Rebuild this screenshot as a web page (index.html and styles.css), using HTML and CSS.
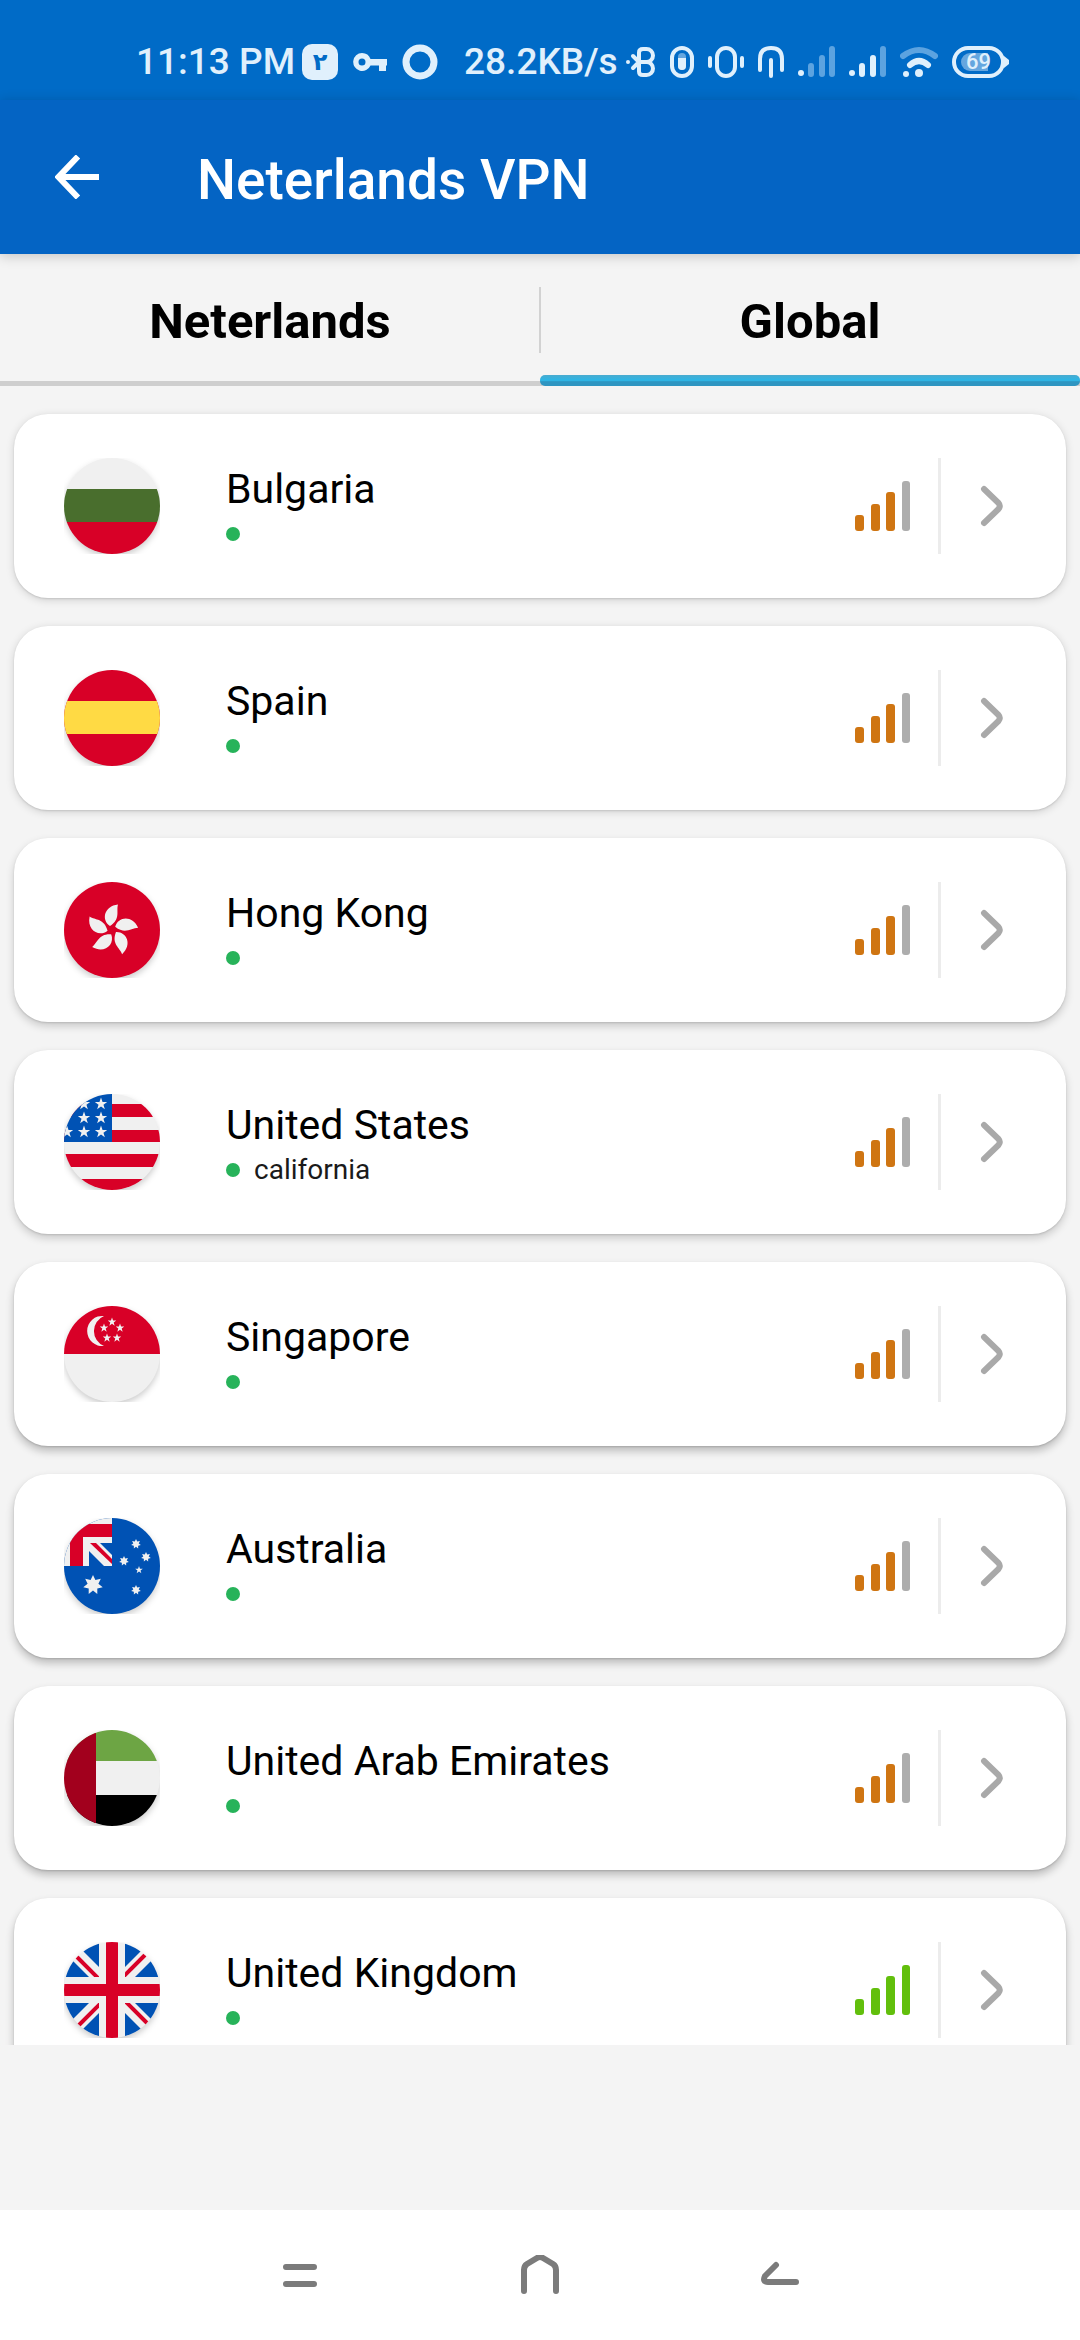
FILE: index.html
```html
<!DOCTYPE html>
<html lang="en">
<head>
<meta charset="utf-8">
<meta name="viewport" content="width=device-width, initial-scale=1">
<title>Neterlands VPN</title>
<link rel="stylesheet" href="styles.css">
</head>
<body>
<svg class="sprite" aria-hidden="true">
  <defs>
    <clipPath id="round"><circle cx="48" cy="48" r="48"/></clipPath>
    <clipPath id="quarter"><rect width="35" height="35"/></clipPath>
    <polygon id="star5" points="0,-10 2.4,-3.2 9.5,-3.1 3.8,1.2 5.9,8.1 0,4 -5.9,8.1 -3.8,1.2 -9.5,-3.1 -2.4,-3.2"/>
    <polygon id="star7" points="0,-10 2.4,-5 7.8,-6.2 5.4,-1.2 9.7,2.2 4.3,3.5 4.3,9 0,5.6 -4.3,9 -4.3,3.5 -9.7,2.2 -5.4,-1.2 -7.8,-6.2 -2.4,-5"/>
    <path id="petal" d="M46 44C37 38 40 24 54 22.500C52 29 57 37 46 44Z"/>
    <g id="union-a">
      <path fill="#0052b4" d="M10 0H35V25ZM0 10V35H25Z"/>
      <path stroke="#d80027" stroke-width="4" d="M8 10L36 38" clip-path="url(#quarter)"/>
    </g>
    <g id="union-b">
      <path fill="#0052b4" d="M10 0H35V25ZM0 10V35H25Z"/>
      <path stroke="#d80027" stroke-width="4" d="M10 8L38 36" clip-path="url(#quarter)"/>
    </g>
  </defs>
  <symbol id="signal" viewBox="0 0 56 50">
    <rect x="0" y="34" width="9" height="16" rx="3"/>
    <rect x="16" y="23" width="9" height="27" rx="3"/>
    <rect x="31" y="11" width="9" height="39" rx="3"/>
    <rect class="last-bar" x="47" y="0" width="8" height="50" rx="3"/>
  </symbol>
  <symbol id="chevron" viewBox="0 0 24 42">
    <path d="M4 4L18.500 18Q21 21 18.500 24L4 38" fill="none" stroke="#a9a9a9" stroke-width="6" stroke-linecap="round" stroke-linejoin="round"/>
  </symbol>
</svg>

<div class="status-bar">
  <span class="clock">11:13 PM</span>
  <span class="badge">۲</span>
  <svg class="key" width="34" height="20" viewBox="0 0 34 20"><path fill-rule="evenodd" d="M9 1a9 9 0 0 1 8.500 6H34v6.500h-1V19h-7v-5.500h-8.500A9 9 0 1 1 9 1zm0 5.500a3.500 3.500 0 1 0 0 7 3.500 3.500 0 0 0 0-7z"/></svg>
  <svg class="ring" width="36" height="36" viewBox="0 0 36 36"><circle cx="18" cy="18" r="14" fill="none" stroke="#e0f0fc" stroke-width="7"/></svg>
  <span class="speed">28.2KB/s</span>
  <div class="indicators">
    <svg width="30" height="32" viewBox="0 0 30 32"><g class="line"><path d="M13 16V6.500Q13 3 17 3h3.500a6 6 0 0 1 0 13H13v9.500Q13 29 17 29h3.500a6.500 6.500 0 0 0 0-13"/><path d="M7 10l6 6-6 6"/></g><circle cx="2" cy="16" r="2"/></svg>
    <svg width="24" height="32" viewBox="0 0 24 32"><rect class="line" x="2" y="2" width="20" height="28" rx="10"/><rect x="8" y="7" width="8" height="17" rx="4" opacity=".45"/><path d="M8 12h8v8a4 4 0 0 1-8 0z"/></svg>
    <svg width="36" height="32" viewBox="0 0 36 32"><rect class="line" x="9" y="2" width="18" height="28" rx="9"/><path class="line" d="M2 12v8M34 12v8"/></svg>
    <svg width="26" height="32" viewBox="0 0 26 32"><path class="line" d="M2 24V13Q2 2 13 2T24 13V24M13 14v16"/></svg>
    <svg width="37" height="32" viewBox="0 0 37 32"><circle cx="3" cy="27" r="3"/><path class="bar faint" d="M13 20v8M24 12v16M34 3v25"/></svg>
    <svg width="37" height="32" viewBox="0 0 37 32"><circle cx="3" cy="27" r="3"/><path class="bar" d="M13 20v8M24 12v16"/><path class="bar faint" d="M34 3v25"/></svg>
    <svg width="38" height="32" viewBox="0 0 38 32"><path class="bar faint" d="M3 10Q19-2 35 10"/><path class="bar" d="M10 19Q19 11 28 19"/><circle cx="19" cy="27" r="4"/><circle cx="6" cy="28" r="3"/></svg>
    <div class="battery">
      <svg width="57" height="32" viewBox="0 0 57 32"><rect class="line" x="2" y="2" width="49" height="28" rx="14"/><path d="M52 10l5 4v4l-5 4z"/><path d="M18 7h18v18H18a9 9 0 0 1 0-18z" opacity=".45"/></svg>
      <span class="battery-level">69</span>
    </div>
  </div>
</div>

<header class="app-bar">
  <button class="back" type="button" aria-label="Back"><svg width="44" height="44" viewBox="0 0 44 44"><path d="M23 1.500L3.500 22 23 42.500M4 22H44" fill="none" stroke="#fff" stroke-width="6"/></svg></button>
  <h1>Neterlands VPN</h1>
</header>

<div class="tabs" role="tablist">
  <button class="tab" type="button" role="tab" aria-selected="false">Neterlands</button>
  <button class="tab" type="button" role="tab" aria-selected="true">Global</button>
</div>

<main class="content">
  <ul class="servers">
    <li><button class="server" type="button">
      <svg class="flag" viewBox="0 0 96 96"><g><g clip-path="url(#round)"><path fill="#f0f0f0" d="M0 0H96V32H0z"/><path fill="#496e2d" d="M0 31H96V65H0z"/><path fill="#d80027" d="M0 64H96V96H0z"/></g></g></svg>
      <span class="info"><span class="name">Bulgaria</span><span class="place"><i class="dot"></i></span></span>
      <svg class="signal fair"><use href="#signal"/></svg><span class="rule"></span><svg class="chevron"><use href="#chevron"/></svg>
    </button></li>
    <li><button class="server" type="button">
      <svg class="flag" viewBox="0 0 96 96"><g><g clip-path="url(#round)"><path fill="#d80027" d="M0 0H96V96H0z"/><path fill="#ffda44" d="M0 31H96V64H0z"/></g></g></svg>
      <span class="info"><span class="name">Spain</span><span class="place"><i class="dot"></i></span></span>
      <svg class="signal fair"><use href="#signal"/></svg><span class="rule"></span><svg class="chevron"><use href="#chevron"/></svg>
    </button></li>
    <li><button class="server" type="button">
      <svg class="flag" viewBox="0 0 96 96"><g><g clip-path="url(#round)"><path fill="#d80027" d="M0 0H96V96H0z"/><g fill="#f0f0f0"><use href="#petal"/><use href="#petal" transform="rotate(72 48 48)"/><use href="#petal" transform="rotate(144 48 48)"/><use href="#petal" transform="rotate(216 48 48)"/><use href="#petal" transform="rotate(288 48 48)"/></g></g></g></svg>
      <span class="info"><span class="name">Hong Kong</span><span class="place"><i class="dot"></i></span></span>
      <svg class="signal fair"><use href="#signal"/></svg><span class="rule"></span><svg class="chevron"><use href="#chevron"/></svg>
    </button></li>
    <li><button class="server" type="button">
      <svg class="flag" viewBox="0 0 96 96"><g><g clip-path="url(#round)"><path fill="#f0f0f0" d="M0 0H96V96H0z"/><path fill="#d80027" d="M0 10H96V23H0zM0 36H96V48H0zM0 60H96V73H0zM0 85H96V96H0z"/><path fill="#0052b4" d="M0 0H48V48H0z"/><g fill="#f0f0f0"><use href="#star5" transform="translate(20 10) scale(.65)"/><use href="#star5" transform="translate(37 10) scale(.65)"/><use href="#star5" transform="translate(20 24) scale(.65)"/><use href="#star5" transform="translate(37 24) scale(.65)"/><use href="#star5" transform="translate(3 38) scale(.65)"/><use href="#star5" transform="translate(20 38) scale(.65)"/><use href="#star5" transform="translate(37 38) scale(.65)"/></g></g></g></svg>
      <span class="info"><span class="name">United States</span><span class="place"><i class="dot"></i>california</span></span>
      <svg class="signal fair"><use href="#signal"/></svg><span class="rule"></span><svg class="chevron"><use href="#chevron"/></svg>
    </button></li>
    <li><button class="server" type="button">
      <svg class="flag" viewBox="0 0 96 96"><g><g clip-path="url(#round)"><path fill="#f0f0f0" d="M0 0H96V96H0z"/><path fill="#d80027" d="M0 0H96V48H0z"/><g fill="#f0f0f0"><path d="M40 10A15.100 15.100 0 1 0 40 40A16.200 16.200 0 0 1 40 10Z"/><use href="#star5" transform="translate(48 16) scale(.45)"/><use href="#star5" transform="translate(40 22) scale(.45)"/><use href="#star5" transform="translate(56 22) scale(.45)"/><use href="#star5" transform="translate(43 32) scale(.45)"/><use href="#star5" transform="translate(53 32) scale(.45)"/></g></g></g></svg>
      <span class="info"><span class="name">Singapore</span><span class="place"><i class="dot"></i></span></span>
      <svg class="signal fair"><use href="#signal"/></svg><span class="rule"></span><svg class="chevron"><use href="#chevron"/></svg>
    </button></li>
    <li><button class="server" type="button">
      <svg class="flag" viewBox="0 0 96 96"><g><g clip-path="url(#round)"><path fill="#0052b4" d="M0 0H96V96H0z"/><path fill="#f0f0f0" d="M0 0H48V25H25V48H0z"/><path fill="#d80027" d="M6 6H48V19H19V48H6z"/><path fill="#f0f0f0" d="M25 25H36L48 37V48H40L25 33z"/><path fill="#d80027" d="M26 25H32L48 41V46z"/><g fill="#f0f0f0"><use href="#star7" transform="translate(29 67)"/><use href="#star7" transform="translate(72 26) scale(.5)"/><use href="#star7" transform="translate(82 39) scale(.5)"/><use href="#star7" transform="translate(60 43) scale(.5)"/><use href="#star5" transform="translate(75 52) scale(.4)"/><use href="#star7" transform="translate(72 72) scale(.5)"/></g></g></g></svg>
      <span class="info"><span class="name">Australia</span><span class="place"><i class="dot"></i></span></span>
      <svg class="signal fair"><use href="#signal"/></svg><span class="rule"></span><svg class="chevron"><use href="#chevron"/></svg>
    </button></li>
    <li><button class="server" type="button">
      <svg class="flag" viewBox="0 0 96 96"><g><g clip-path="url(#round)"><path fill="#f0f0f0" d="M0 0H96V96H0z"/><path fill="#6da544" d="M0 0H96V31H0z"/><path d="M0 65H96V96H0z"/><path fill="#a2001d" d="M0 0H32V96H0z"/></g></g></svg>
      <span class="info"><span class="name">United Arab Emirates</span><span class="place"><i class="dot"></i></span></span>
      <svg class="signal fair"><use href="#signal"/></svg><span class="rule"></span><svg class="chevron"><use href="#chevron"/></svg>
    </button></li>
    <li><button class="server" type="button">
      <svg class="flag" viewBox="0 0 96 96"><g><g clip-path="url(#round)"><path fill="#f0f0f0" d="M0 0H96V96H0z"/><use href="#union-a"/><use href="#union-a" transform="rotate(180 48 48)"/><use href="#union-b" transform="translate(96 0) scale(-1 1)"/><use href="#union-b" transform="translate(0 96) scale(1 -1)"/><path fill="#d80027" d="M42 0H54V42H96V54H54V96H42V54H0V42H42z"/></g></g></svg>
      <span class="info"><span class="name">United Kingdom</span><span class="place"><i class="dot"></i></span></span>
      <svg class="signal good"><use href="#signal"/></svg><span class="rule"></span><svg class="chevron"><use href="#chevron"/></svg>
    </button></li>
  </ul>
</main>

<nav class="system-nav">
  <button type="button" aria-label="Recent apps"><svg width="40" height="40" viewBox="0 0 40 40"><path d="M6 12H34M6 29H34"/></svg></button>
  <button type="button" aria-label="Home"><svg width="40" height="40" viewBox="0 0 40 40"><path d="M4 36V15Q4 11 7 9L17 3Q20 1 23 3L33 9Q36 11 36 15V36"/></svg></button>
  <button type="button" aria-label="Back"><svg width="40" height="40" viewBox="0 0 40 40"><path d="M16 10L5 21Q2 27 8 27H36"/></svg></button>
</nav>
</body>
</html>
```
FILE: styles.css
```css
* {
  box-sizing: border-box;
}

body {
  margin: 0;
  height: 100vh;
  display: flex;
  flex-direction: column;
  background: #f4f4f4;
  color: #000;
  font-family: Roboto, "Noto Sans", sans-serif;
}

button {
  margin: 0;
  padding: 0;
  border: 0;
  background: none;
  color: inherit;
  font: inherit;
}

svg {
  display: block;
  flex: none;
}

.sprite {
  position: absolute;
  width: 0;
  height: 0;
}

/* Status bar */

.status-bar {
  flex: none;
  display: flex;
  align-items: center;
  height: 100px;
  padding: 24px 71px 0 136px;
  background: #006bc7;
  color: #e0f0fc;
  fill: #e0f0fc;
  font-size: 37px;
  line-height: 44px;
  font-weight: 500;
  white-space: nowrap;
}

.badge {
  width: 36px;
  height: 36px;
  margin-left: 7px;
  border-radius: 10px;
  background: #e0f0fc;
  color: #006bc7;
  font-family: "DejaVu Sans", sans-serif;
  font-size: 24px;
  font-weight: 700;
  line-height: 36px;
  text-align: center;
}

.key {
  margin-left: 15px;
}

.ring {
  margin-left: 15px;
}

.speed {
  margin-left: 26px;
}

.indicators {
  display: flex;
  align-items: center;
  gap: 14px;
  margin-left: auto;
}

.line,
.bar {
  fill: none;
  stroke: #e0f0fc;
  stroke-width: 4;
  stroke-linecap: round;
  stroke-linejoin: round;
}

.bar {
  stroke-width: 6;
}

.faint {
  stroke: #5ca3e0;
}

.battery {
  display: grid;
}

.battery > * {
  grid-area: 1 / 1;
}

.battery-level {
  padding-right: 4px;
  font-size: 22px;
  line-height: 32px;
  text-align: center;
}

/* App bar */

.app-bar {
  flex: none;
  display: flex;
  align-items: center;
  gap: 98px;
  height: 154px;
  padding: 0 55px;
  background: #0464c4;
  color: #fff;
  box-shadow: 0 2px 12px rgba(0, 0, 0, 0.2);
}

h1 {
  margin: 0;
  padding-top: 6px;
  font-size: 55px;
  line-height: 64px;
  font-weight: 500;
}

/* Tabs */

.tabs {
  flex: none;
  display: grid;
  grid-template-columns: 1fr 1fr;
  height: 132px;
  background:
    linear-gradient(#d2d2d2, #d2d2d2) center 33px / 2px 66px no-repeat,
    linear-gradient(#cecece, #cecece) bottom / 100% 5px no-repeat;
}

.tab {
  display: flex;
  flex-direction: column;
  justify-content: space-between;
  align-items: center;
  padding-top: 38px;
  font-size: 49px;
  line-height: 60px;
  font-weight: 700;
}

.tab[aria-selected="true"]::after {
  content: "";
  width: 100%;
  height: 11px;
  border-radius: 5px;
  background: linear-gradient(#4aabcf 0, #2fb4e3 40%, #2fb4e3 55%, #2e95c1 60%);
}

/* Server list */

.content {
  flex: 1;
  min-height: 0;
  display: flex;
  padding-bottom: 165px;
}

.servers {
  flex: 1;
  margin: 0;
  padding: 28px 14px;
  list-style: none;
  overflow: hidden;
}

.servers li {
  margin-bottom: 28px;
}

.server {
  display: flex;
  align-items: center;
  width: 100%;
  padding: 44px 62px 44px 50px;
  border-radius: 34px;
  background: #fff;
  text-align: left;
  box-shadow: 0 2px 8px rgba(0, 0, 0, 0.15), 0 1px 2px rgba(0, 0, 0, 0.12);
}

.servers li:nth-child(n + 3) .server {
  box-shadow: 0 4px 8px rgba(0, 0, 0, 0.18), 0 1px 2px rgba(0, 0, 0, 0.12);
}

.servers li:nth-child(n + 5) .server {
  box-shadow: 0 5px 9px rgba(0, 0, 0, 0.24), 0 1px 2px rgba(0, 0, 0, 0.14);
}

.flag {
  width: 96px;
  height: 96px;
  overflow: hidden;
}

.flag > g {
  filter: drop-shadow(0 3px 3px rgba(0, 0, 0, 0.2));
}

.info {
  flex: 1;
  display: flex;
  flex-direction: column;
  padding: 6px 0 0 66px;
}

.name {
  font-size: 41px;
  line-height: 50px;
}

.place {
  display: flex;
  align-items: center;
  gap: 14px;
  height: 40px;
  color: #1a1a1a;
  font-size: 28px;
  line-height: 40px;
}

.dot {
  width: 14px;
  height: 14px;
  border-radius: 50%;
  background: #27b35a;
}

.signal {
  --last: #adadad;
  width: 56px;
  height: 50px;
}

.fair {
  fill: #cf7512;
}

.good {
  --last: #62bf0c;
  fill: #62bf0c;
}

.last-bar {
  fill: var(--last);
}

.rule {
  width: 3px;
  height: 96px;
  margin: 0 39px 0 27px;
  background: #ececec;
}

.chevron {
  width: 24px;
  height: 42px;
}

/* System navigation */

.system-nav {
  flex: none;
  display: flex;
  justify-content: center;
  gap: 200px;
  height: 130px;
  background: #fff;
}

.system-nav path {
  fill: none;
  stroke: #7b7b7b;
  stroke-width: 6;
  stroke-linecap: round;
  stroke-linejoin: round;
}
```
